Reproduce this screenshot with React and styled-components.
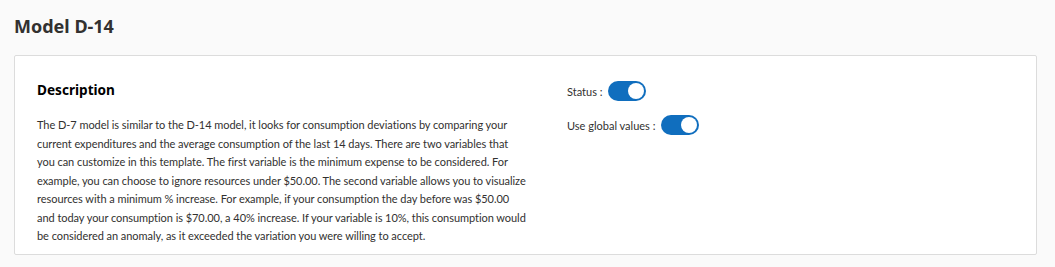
import styled, { createGlobalStyle } from "styled-components";

/* ────────────────────── Global ────────────────────── */
const GlobalStyle = createGlobalStyle`
  html, body {
    margin: 0;
    padding: 0;
    background: #fafafa;
  }
  body {
    font-family: Lato, "Open Sans", "Liberation Sans", sans-serif;
    color: #323130;
  }
`;

/* ────────────────────── Styled Components ────────────────────── */
const Page = styled.div`
  padding: 14px 18px 13px 14px;
`;

const Title = styled.h1`
  margin: 0 0 17px;
  font-family: "Noto Sans", sans-serif;
  font-size: 18px;
  line-height: 24px;
  font-weight: 700;
  color: #323130;
`;

const Card = styled.section`
  display: grid;
  grid-template-columns: 491px 1fr;
  column-gap: 39px;
  height: 200px;
  box-sizing: border-box;
  padding: 24px 22px 0 22px;
  background: #fff;
  border: 1px solid #dcdcdc;
  border-radius: 2px;
`;

const Column = styled.div`
  display: flex;
  flex-direction: column;
`;

const Heading = styled.h2`
  margin: 0 0 16px;
  font-family: "Noto Sans", sans-serif;
  font-size: 13.6px;
  line-height: 20px;
  font-weight: 700;
  color: #000;
`;

const Text = styled.p`
  margin: 0;
  font-size: 11px;
  letter-spacing: -0.05px;
  line-height: 18.5px;
  color: #323130;
`;

const Settings = styled.div`
  display: flex;
  flex-direction: column;
  gap: 14px;
  padding-top: 1px;
`;

const Row = styled.label`
  display: flex;
  align-items: center;
  gap: 6px;
  font-size: 11px;
  color: #323130;
`;

const Track = styled.span`
  position: relative;
  display: inline-block;
  width: 38px;
  height: 20px;
  border-radius: 10px;
  background: ${(p) => (p.$on ? "#106ebe" : "#c8c6c4")};
`;

const Knob = styled.span`
  position: absolute;
  top: 2px;
  left: ${(p) => (p.$on ? "20px" : "2px")};
  width: 16px;
  height: 16px;
  border-radius: 50%;
  background: #fff;
`;

/* ────────────────────── Component ────────────────────── */
const Toggle = ({ on }) => (
  <Track $on={on}>
    <Knob $on={on} />
  </Track>
);

const description =
  "The D-7 model is similar to the D-14 model, it looks for consumption deviations by comparing your current expenditures and the average consumption of the last 14 days. There are two variables that you can customize in this template. The first variable is the minimum expense to be considered. For example, you can choose to ignore resources under $50.00. The second variable allows you to visualize resources with a minimum % increase. For example, if your consumption the day before was $50.00 and today your consumption is $70.00, a 40% increase. If your variable is 10%, this consumption would be considered an anomaly, as it exceeded the variation you were willing to accept.";

const App = () => (
  <>
    <GlobalStyle />
    <Page>
      <Title>Model D-14</Title>
      <Card>
        <Column>
          <Heading>Description</Heading>
          <Text>{description}</Text>
        </Column>
        <Settings>
          <Row>
            Status :
            <Toggle on />
          </Row>
          <Row>
            Use global values :
            <Toggle on />
          </Row>
        </Settings>
      </Card>
    </Page>
  </>
);

export default App;
